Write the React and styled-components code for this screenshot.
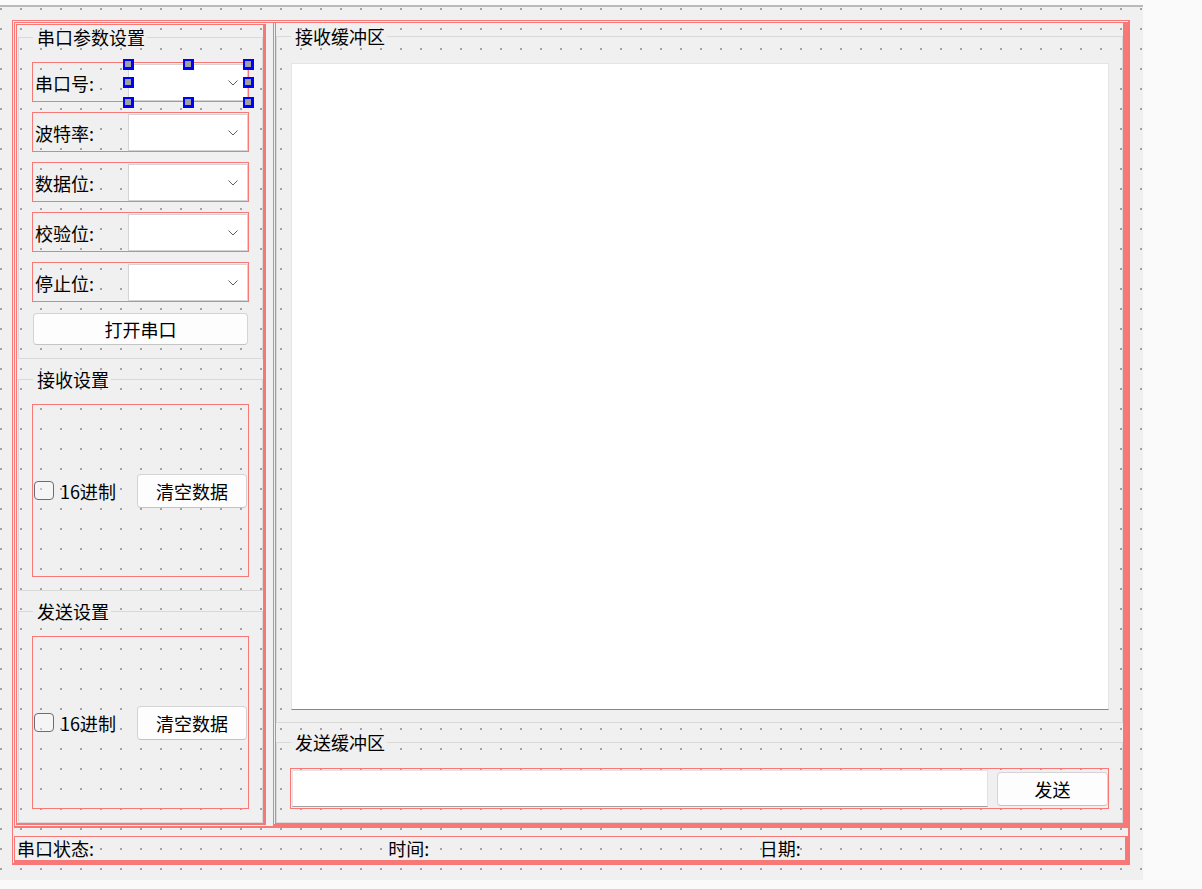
import React from 'react';
import styled, { createGlobalStyle } from 'styled-components';

const RED = '#f87878';

const GlobalStyle = createGlobalStyle`
  html, body {
    margin: 0;
    padding: 0;
    background: #fafafa;
  }
  body {
    font-family: "Noto Sans CJK SC", "Noto Sans", sans-serif;
    font-size: 18px;
    color: #000;
  }
`;

const Page = styled.div`
  padding-top: 5px;
`;

// designer form with the 20px dot grid
const Form = styled.div`
  width: 1143px;
  box-sizing: border-box;
  border-top: 2px solid #bababa;
  background-color: #f0f0f0;
  background-image: conic-gradient(at 2px 2px, transparent 75%, #a3a3a3 0);
  background-size: 20px 20px;
  background-position: 0 1px;
  padding: 13px 13px 15px 12px;
`;

const TopLayout = styled.div`
  display: flex;
  flex-direction: column;
  gap: 8px;
  border: 1px solid ${RED};
  border-right-width: 2px;
  border-bottom-width: 2px;
  padding: 1px 0 0 1px;
`;

const MainLayout = styled.div`
  display: flex;
  align-items: stretch;
  border: 1px solid ${RED};
  border-right-width: 2px;
  border-bottom-width: 2px;
  padding: 0 0 0 1px;
`;

const LeftColumn = styled.div`
  flex: none;
  width: 250px;
  box-sizing: border-box;
  margin: 1px 0;
  border: 1px solid ${RED};
  border-right-width: 3px;
  border-bottom-width: 2px;
  padding: 2px 0 0 1px;
  display: flex;
  flex-direction: column;
  gap: 10px;
`;

const RightColumn = styled.div`
  flex: 1;
  margin-left: 7px;
  display: flex;
  flex-direction: column;
  gap: 9px;
  border-left: 3px double ${RED};
  border-right: 3px solid ${RED};
  border-bottom: 3px solid ${RED};
  padding-top: 3px;
`;

const GroupBox = styled.fieldset`
  margin: 0;
  min-width: 0;
  border: 1px solid #d9d9d9;
  padding: ${(p) => p.$pt}px 13px ${(p) => p.$pb}px;
  display: flex;
  flex-direction: column;
  flex: ${(p) => (p.$grow ? 1 : 'none')};
`;

const Legend = styled.legend`
  margin-left: 1px;
  padding: 0 2px 0 4px;
  line-height: 20px;
  font-size: 18px;
`;

const FieldList = styled.div`
  display: flex;
  flex-direction: column;
  gap: 10px;
`;

const FieldRow = styled.div`
  display: flex;
  align-items: flex-end;
  height: 40px;
  box-sizing: border-box;
  border: 1px solid ${RED};
  padding-left: 2px;
`;

const FieldLabel = styled.span`
  flex: 1;
  align-self: center;
  line-height: 20px;
  padding-top: 2px;
`;

const Combo = styled.div`
  position: relative;
  width: 120px;
  height: 37px;
  box-sizing: border-box;
  background: #fff;
  border: 1px solid #d4d4d4;
  display: flex;
  align-items: center;
  justify-content: flex-end;
  padding-right: 9px;
`;

// designer selection handles around the current widget
const Handle = styled.span`
  position: absolute;
  left: ${(p) => p.$x}px;
  top: ${(p) => p.$y}px;
  width: 11px;
  height: 11px;
  box-sizing: border-box;
  background: #a0a0a0;
  border: 2px solid #0000ff;
  border-right-width: 3px;
  border-bottom-width: 3px;
  z-index: 2;
`;

const PushButton = styled.button`
  font-family: inherit;
  font-size: 18px;
  color: #000;
  background: #fdfdfd;
  border: 1px solid #d4d4d4;
  border-bottom-color: #c4c4c4;
  border-radius: 4px;
  padding: 0;
  display: flex;
  align-items: center;
  justify-content: center;
  width: ${(p) => p.$w}px;
  height: ${(p) => p.$h}px;
  margin: ${(p) => p.$m || '0'};
  flex: none;
`;

const OptionBox = styled.div`
  height: 173px;
  box-sizing: border-box;
  border: 1px solid ${RED};
  display: flex;
  align-items: center;
  padding: 0 1px;
`;

const CheckLabel = styled.label`
  display: flex;
  align-items: center;
  gap: 6px;
  line-height: 20px;
`;

const CheckBox = styled.span`
  width: 20px;
  height: 19px;
  box-sizing: border-box;
  border: 1px solid #6e6e6e;
  border-radius: 4px;
  background: rgba(255, 255, 255, 0.35);
`;

const TextArea = styled.div`
  flex: 1;
  margin-left: 1px;
  background: #fff;
  border: 1px solid #e4e4e4;
  border-bottom-color: #868686;
`;

const SendRow = styled.div`
  height: 41px;
  box-sizing: border-box;
  border: 1px solid ${RED};
  padding: 1px 0 1px 1px;
  display: flex;
  align-items: center;
  gap: 9px;
`;

const LineEdit = styled.div`
  flex: 1;
  align-self: stretch;
  background: #fff;
  border: 1px solid #e2e2e2;
  border-bottom-color: #a0a0a0;
`;

const StatusLayout = styled.div`
  display: grid;
  grid-template-columns: repeat(3, 1fr);
  column-gap: 6px;
  height: 27px;
  box-sizing: border-box;
  border: 1px solid ${RED};
  border-right-width: 3px;
  border-bottom-width: 3px;
  padding-left: 2px;
  line-height: 23px;
`;

const Chevron = () => (
  <svg width="10" height="6" viewBox="0 0 10 6">
    <path d="M0.5 0.5 L5 5 L9.5 0.5" fill="none" stroke="#5f5f5f" strokeWidth="1" />
  </svg>
);

const HANDLES = [
  [-6, -6], [54, -6], [114, -6],
  [-6, 12], [114, 12],
  [-6, 32], [54, 32], [114, 32],
];

const fields = ['串口号:', '波特率:', '数据位:', '校验位:', '停止位:'];

const OptionGroup = ({ title }) => (
  <GroupBox $pt={15} $pb={13}>
    <Legend>{title}</Legend>
    <OptionBox>
      <CheckLabel>
        <CheckBox />
        16进制
      </CheckLabel>
      <PushButton $w={110} $h={34} $m="0 0 0 auto">清空数据</PushButton>
    </OptionBox>
  </GroupBox>
);

export default function App() {
  return (
    <Page>
      <GlobalStyle />
      <Form>
        <TopLayout>
          <MainLayout>
            <LeftColumn>
              <GroupBox $pt={15} $pb={13}>
                <Legend>串口参数设置</Legend>
                <FieldList>
                  {fields.map((f, i) => (
                    <FieldRow key={f}>
                      <FieldLabel>{f}</FieldLabel>
                      <Combo>
                        <Chevron />
                        {i === 0 && HANDLES.map(([x, y]) => <Handle key={`${x}-${y}`} $x={x} $y={y} />)}
                      </Combo>
                    </FieldRow>
                  ))}
                </FieldList>
                <PushButton $w={215} $h={32} $m="11px 0 0 1px">打开串口</PushButton>
              </GroupBox>
              <OptionGroup title="接收设置" />
              <OptionGroup title="发送设置" />
            </LeftColumn>
            <RightColumn>
              <GroupBox $grow $pt={17} $pb={12}>
                <Legend>接收缓冲区</Legend>
                <TextArea />
              </GroupBox>
              <GroupBox $pt={16} $pb={13}>
                <Legend>发送缓冲区</Legend>
                <SendRow>
                  <LineEdit />
                  <PushButton $w={111} $h={34}>发送</PushButton>
                </SendRow>
              </GroupBox>
            </RightColumn>
          </MainLayout>
          <StatusLayout>
            <span>串口状态:</span>
            <span>时间:</span>
            <span>日期:</span>
          </StatusLayout>
        </TopLayout>
      </Form>
    </Page>
  );
}
